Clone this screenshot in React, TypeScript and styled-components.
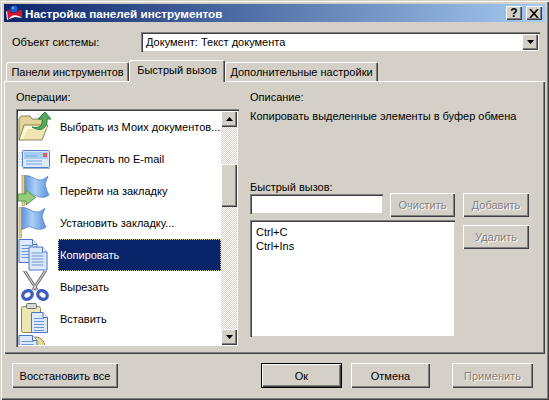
import styled, { createGlobalStyle, css } from 'styled-components';

const GlobalStyle = createGlobalStyle`
  html, body { margin: 0; padding: 0; background: #d4d0c8; }
  body { font-family: "Liberation Sans", Arial, sans-serif; font-size: 11px; color: #000; }
`;

const raised = css`
  background: #d4d0c8;
  box-shadow: inset 1px 1px 0 #fff, inset -1px -1px 0 #404040, inset -2px -2px 0 #808080;
`;

const sunken = css`
  background: #fff;
  box-shadow: inset 1px 1px 0 #808080, inset 2px 2px 0 #404040, inset -1px -1px 0 #d4d0c8, inset -2px -2px 0 #fff;
`;

const Window = styled.div`
  width: 549px;
  height: 400px;
  box-sizing: border-box;
  padding: 4px;
  display: flex;
  flex-direction: column;
  overflow: hidden;
  background: #d4d0c8;
  box-shadow: inset 1px 1px 0 #d4d0c8, inset 2px 2px 0 #fff, inset -1px -1px 0 #404040, inset -2px -2px 0 #808080;
`;

const TitleBar = styled.div`
  height: 18px;
  flex: none;
  display: flex;
  align-items: center;
  gap: 2px;
  padding: 0 3px 0 1px;
  background: linear-gradient(90deg, #0a246a, #a6caf0);
`;

const TitleText = styled.span`
  flex: 1;
  color: #fff;
  font-weight: bold;
  font-size: 11.7px;
  white-space: nowrap;
`;

const CaptionButton = styled.div`
  ${raised}
  width: 16px;
  height: 14px;
  margin-left: 2px;
  display: flex;
  align-items: center;
  justify-content: center;
  font-weight: bold;
  font-size: 12px;
  line-height: 14px;
`;

const ObjectRow = styled.div`
  height: 20px;
  margin-top: 10px;
  flex: none;
  display: flex;
  align-items: center;
  padding: 0 5px 0 8px;
`;

const ObjectLabel = styled.span`
  width: 129px;
  flex: none;
`;

const Combo = styled.div`
  ${sunken}
  flex: 1;
  height: 20px;
  display: flex;
  align-items: center;
  justify-content: space-between;
  padding: 2px 2px 2px 5px;
  box-sizing: border-box;
`;

const ArrowButton = styled.div`
  ${raised}
  width: 16px;
  align-self: stretch;
  display: flex;
  align-items: center;
  justify-content: center;
  flex: none;
`;

const TabStrip = styled.div`
  height: 21px;
  margin-top: 8px;
  flex: none;
  display: flex;
  align-items: flex-end;
  padding-left: 2px;
  position: relative;
  z-index: 1;
`;

const Tab = styled.div<{ $active?: boolean; $width: number }>`
  width: ${p => p.$width}px;
  height: ${p => (p.$active ? 22 : 19)}px;
  margin-bottom: ${p => (p.$active ? -1 : 0)}px;
  box-sizing: border-box;
  display: flex;
  align-items: center;
  justify-content: center;
  white-space: nowrap;
  background: #d4d0c8;
  border-radius: 2px 2px 0 0;
  padding-bottom: ${p => (p.$active ? 3 : 0)}px;
  box-shadow: inset 1px 1px 0 #fff, inset -1px 0 0 #404040, inset -2px 0 0 #808080;
`;

const Panel = styled.div`
  height: 273px;
  flex: none;
  box-sizing: border-box;
  padding: 9px 12px 7px 12px;
  display: grid;
  grid-template-columns: 223px 1fr;
  column-gap: 11px;
  background: #d4d0c8;
  box-shadow: inset 1px 1px 0 #fff, inset -1px -1px 0 #404040, inset -2px -2px 0 #808080;
`;

const Column = styled.div`
  display: flex;
  flex-direction: column;
  min-height: 0;
`;

const Label = styled.div`
  height: 14px;
  line-height: 14px;
  white-space: nowrap;
`;

const OperationsBox = styled.div`
  ${sunken}
  margin-top: 5px;
  height: 238px;
  box-sizing: border-box;
  padding: 2px;
  display: flex;
`;

const Rows = styled.div`
  flex: 1;
  overflow: hidden;
`;

const Row = styled.div`
  height: 32px;
  display: flex;
  align-items: stretch;
`;

const IconCell = styled.div`
  width: 40px;
  flex: none;
  svg { display: block; }
`;

const RowText = styled.div<{ $selected?: boolean }>`
  flex: 1;
  min-width: 0;
  display: flex;
  align-items: center;
  padding-left: 2px;
  white-space: nowrap;
  color: ${p => (p.$selected ? '#fff' : '#000')};
  background: ${p => (p.$selected ? '#0a246a' : 'transparent')};
  outline: ${p => (p.$selected ? '1px dotted #d4d0a0' : 'none')};
  outline-offset: -1px;
`;

const ScrollBar = styled.div`
  width: 16px;
  flex: none;
  display: flex;
  flex-direction: column;
  background-color: #fff;
  background-image: conic-gradient(#d4d0c8 25%, #fff 0 50%, #d4d0c8 0 75%, #fff 0);
  background-size: 2px 2px;
`;

const ScrollButton = styled.div`
  ${raised}
  height: 16px;
  flex: none;
  display: flex;
  align-items: center;
  justify-content: center;
`;

const ScrollThumb = styled.div`
  ${raised}
  height: 43px;
  margin-top: 37px;
  flex: none;
`;

const ScrollSpacer = styled.div`
  flex: 1;
`;

const DescriptionText = styled.div`
  margin-top: 5px;
  height: 52px;
  line-height: 14px;
  white-space: nowrap;
`;

const ShortcutLabel = styled(Label)`
  margin-top: 19px;
`;

const ShortcutGrid = styled.div`
  display: grid;
  grid-template-columns: 205px 66px;
  column-gap: 8px;
  margin-top: -1px;
`;

const InputRow = styled.div`
  display: flex;
  align-items: flex-start;
  gap: 7px;
  height: 27px;
`;

const ShortcutInput = styled.div`
  ${sunken}
  width: 134px;
  height: 20px;
  margin-top: 1px;
`;

const KeysList = styled.div`
  ${sunken}
  height: 117px;
  box-sizing: border-box;
  padding: 5px 6px;
  line-height: 14px;
`;

const SideButtons = styled.div`
  display: flex;
  flex-direction: column;
  gap: 8px;
`;

const Button = styled.div<{ $width?: number; $height?: number; $disabled?: boolean; $default?: boolean }>`
  ${raised}
  width: ${p => (p.$width ? `${p.$width}px` : '100%')};
  height: ${p => p.$height ?? 24}px;
  flex: none;
  box-sizing: border-box;
  display: flex;
  align-items: center;
  justify-content: center;
  white-space: nowrap;
  color: ${p => (p.$disabled ? '#808080' : '#000')};
  text-shadow: ${p => (p.$disabled ? '1px 1px 0 #fff' : 'none')};
  ${p => p.$default && css`
    box-shadow: inset 0 0 0 1px #000, inset 2px 2px 0 #fff, inset -2px -2px 0 #404040, inset -3px -3px 0 #808080;
  `}
`;

const Footer = styled.div`
  margin-top: 9px;
  padding: 0 12px 0 8px;
  display: flex;
  align-items: center;
`;

const FooterGroup = styled.div`
  margin-left: 143px;
  display: flex;
  gap: 9px;
`;

const ApplyButton = styled(Button)`
  margin-left: 13px;
`;

const Logo = () => (
  <svg width="18" height="16" viewBox="0 0 18 16">
    <path d="M1 6 C5 9 12 9 17 6 L17 13 L10 12 C7 13 4 14 2 15 Z" fill="#fff" />
    <path d="M2 5 L5 5 C5 9 12 9 14 5 L17 5 L17 13 C12 9 6 9 3 15 Z" fill="#d8102c" />
    <circle cx="9" cy="4" r="3.6" fill="#1c5cc8" />
    <circle cx="8" cy="3" r="1.2" fill="#6fa8f0" />
  </svg>
);

const Arrow = ({ up }: { up?: boolean }) => (
  <svg width="7" height="4" viewBox="0 0 7 4">
    <path d={up ? 'M3.5 0 L7 4 L0 4 Z' : 'M0 0 L7 0 L3.5 4 Z'} fill="#000" />
  </svg>
);

const CloseGlyph = () => (
  <svg width="10" height="9" viewBox="0 0 10 9">
    <path d="M1 0 L9 9 M9 0 L1 9" stroke="#000" strokeWidth="1.6" fill="none" />
  </svg>
);

const page = (x: number, y: number, key: string, w = 19, h = 24) => (
  <g key={key} transform={`translate(${x} ${y})`}>
    <path d={`M0.5 0.5 H${w - 5} L${w - 0.5} 5.5 V${h - 0.5} H0.5 Z`} fill="#dbe9fa" stroke="#4f74c4" />
    <path d={`M${w - 5} 0.5 V5.5 H${w - 0.5}`} fill="#f4f8fe" stroke="#4f74c4" />
    {[6, 9, 12, 15, 18].map(l => (
      <path key={l} d={`M3 ${l}.5 H${w - 4}`} stroke="#6a98dc" />
    ))}
  </g>
);

const FolderIcon = () => (
  <svg width="34" height="32" viewBox="0 0 34 32">
    <path d="M1 8 L3 5 H12 L14 8 H25 V24 L1 29 Z" fill="#e0d498" stroke="#8c8558" />
    <path d="M1 29 L6 14 H30 L24 29 Z" fill="#efe6b4" stroke="#8c8558" />
    <path d="M2 28 L7 15 H29 L28 18 H10 L5 28 Z" fill="#faf6d8" />
    <path d="M14 16 C22 18 25 14 24 8 L20 8 L27 1 L33 8 L29 8 C30 16 24 22 14 16 Z" fill="#58a858" stroke="#2f7f47" />
  </svg>
);

const MailIcon = () => (
  <svg width="32" height="32" viewBox="0 0 32 32">
    <path d="M1 10 H4 M0 13 H4 M1 16 H4 M0 19 H4 M1 22 H4" stroke="#7fa0d8" strokeDasharray="1 1" />
    <rect x="4.5" y="7.5" width="27" height="17" rx="1" fill="#dbe9f8" stroke="#4f7fc8" />
    <rect x="6" y="9" width="24" height="7" fill="#a8cdf0" />
    <rect x="25" y="10" width="4" height="4" fill="#e06060" />
    <path d="M8 13 H19 M8 18 H24 M8 21 H24" stroke="#6fa8e0" />
    <path d="M5 25.5 H32" stroke="#a8b4c8" />
  </svg>
);

const FlagGradient = ({ id }: { id: string }) => (
  <defs>
    <linearGradient id={id} x1="0" y1="0" x2="1" y2="0">
      <stop offset="0" stopColor="#5a90dc" />
      <stop offset="0.45" stopColor="#acd0f6" />
      <stop offset="1" stopColor="#5a90dc" />
    </linearGradient>
  </defs>
);

// mast sits at x 0..2, the cloth hangs from it
const Flag = ({ id }: { id: string }) => (
  <>
    <FlagGradient id={id} />
    <path d="M2 1 C8 -1 12 5 18 5 C21 5 24 3 26 1 L23 9 C24 13 25 17 27 20 C22 24 16 22 12 20 C9 19 5 22 2 23 Z" fill={`url(#${id})`} stroke="#4f78c0" strokeWidth="0.7" />
    <rect x="0" y="0" width="2.5" height="31" fill="#e0d08c" stroke="#8c8558" strokeWidth="0.5" />
  </>
);

const FlagArrowIcon = () => (
  <svg width="32" height="32" viewBox="0 0 32 32">
    <g transform="translate(4 0)"><Flag id="flag-a" /></g>
    <path d="M0 19 H8 V15 L17.5 22.5 L8 30 V26 H0 Z" fill="#94cc78" stroke="#5f9a50" />
  </svg>
);

const FlagIcon = () => (
  <svg width="32" height="32" viewBox="0 0 32 32">
    <g transform="translate(1 0)"><Flag id="flag-b" /></g>
  </svg>
);

const CopyIcon = () => (
  <svg width="32" height="32" viewBox="0 0 32 32">
    {page(0.5, 0, 'a')}
    {page(10.5, 7.5, 'b')}
  </svg>
);

const ScissorsIcon = () => (
  <svg width="32" height="32" viewBox="0 0 32 32">
    <path d="M6 -1 L19 19 M28 -1 L15 19" stroke="#707070" strokeWidth="3" fill="none" />
    <path d="M6 -1 L19 19 M28 -1 L15 19" stroke="#e4e4e4" strokeWidth="1" fill="none" />
    <ellipse cx="9.5" cy="24" rx="5" ry="4" fill="none" stroke="#3f5fc0" strokeWidth="3.4" transform="rotate(-30 9.5 24)" />
    <ellipse cx="24.5" cy="24" rx="5" ry="4" fill="none" stroke="#3f5fc0" strokeWidth="3.4" transform="rotate(30 24.5 24)" />
  </svg>
);

const PasteIcon = () => (
  <svg width="32" height="32" viewBox="0 0 32 32">
    <rect x="3.5" y="3.5" width="19" height="26" rx="2" fill="#eee6b4" stroke="#8c8558" />
    <rect x="8.5" y="0.5" width="10" height="5" rx="1" fill="#d8d8d8" stroke="#707070" />
    {page(13, 9, 'c', 17, 21)}
  </svg>
);

const StoreIcon = () => (
  <svg width="32" height="32" viewBox="0 0 32 32">
    <ellipse cx="18" cy="12" rx="9" ry="10" fill="#e8d890" stroke="#8c8558" />
    {page(0.5, 0, 'd', 19, 24)}
  </svg>
);

const operations = [
  { title: 'Выбрать из Моих документов...', icon: <FolderIcon /> },
  { title: 'Переслать по E-mail', icon: <MailIcon /> },
  { title: 'Перейти на закладку', icon: <FlagArrowIcon /> },
  { title: 'Установить закладку...', icon: <FlagIcon /> },
  { title: 'Копировать', icon: <CopyIcon />, selected: true },
  { title: 'Вырезать', icon: <ScissorsIcon /> },
  { title: 'Вставить', icon: <PasteIcon /> },
  { title: '', icon: <StoreIcon /> },
];

function App() {
  return (
    <Window>
      <GlobalStyle />
      <TitleBar>
        <Logo />
        <TitleText>Настройка панелей инструментов</TitleText>
        <CaptionButton>?</CaptionButton>
        <CaptionButton><CloseGlyph /></CaptionButton>
      </TitleBar>

      <ObjectRow>
        <ObjectLabel>Объект системы:</ObjectLabel>
        <Combo>
          Документ: Текст документа
          <ArrowButton><Arrow /></ArrowButton>
        </Combo>
      </ObjectRow>

      <TabStrip>
        <Tab $width={123}>Панели инструментов</Tab>
        <Tab $width={96} $active>Быстрый вызов</Tab>
        <Tab $width={153}>Дополнительные настройки</Tab>
      </TabStrip>

      <Panel>
        <Column>
          <Label>Операции:</Label>
          <OperationsBox>
            <Rows>
              {operations.map(op => (
                <Row key={op.title || 'last'}>
                  <IconCell>{op.icon}</IconCell>
                  <RowText $selected={op.selected}>{op.title}</RowText>
                </Row>
              ))}
            </Rows>
            <ScrollBar>
              <ScrollButton><Arrow up /></ScrollButton>
              <ScrollThumb />
              <ScrollSpacer />
              <ScrollButton><Arrow /></ScrollButton>
            </ScrollBar>
          </OperationsBox>
        </Column>
        <Column>
          <Label>Описание:</Label>
          <DescriptionText>Копировать выделенные элементы в буфер обмена</DescriptionText>
          <ShortcutLabel>Быстрый вызов:</ShortcutLabel>
          <ShortcutGrid>
            <Column>
              <InputRow>
                <ShortcutInput />
                <Button $width={65} $disabled>Очистить</Button>
              </InputRow>
              <KeysList>
                <div>Ctrl+C</div>
                <div>Ctrl+Ins</div>
              </KeysList>
            </Column>
            <SideButtons>
              <Button $disabled>Добавить</Button>
              <Button $disabled>Удалить</Button>
            </SideButtons>
          </ShortcutGrid>
        </Column>
      </Panel>

      <Footer>
        <Button $width={106} $height={25}>Восстановить все</Button>
        <FooterGroup>
          <Button $width={81} $height={25} $default>Ок</Button>
          <Button $width={79} $height={25}>Отмена</Button>
          <ApplyButton $width={81} $height={25} $disabled>Применить</ApplyButton>
        </FooterGroup>
      </Footer>
    </Window>
  );
}

export default App;
